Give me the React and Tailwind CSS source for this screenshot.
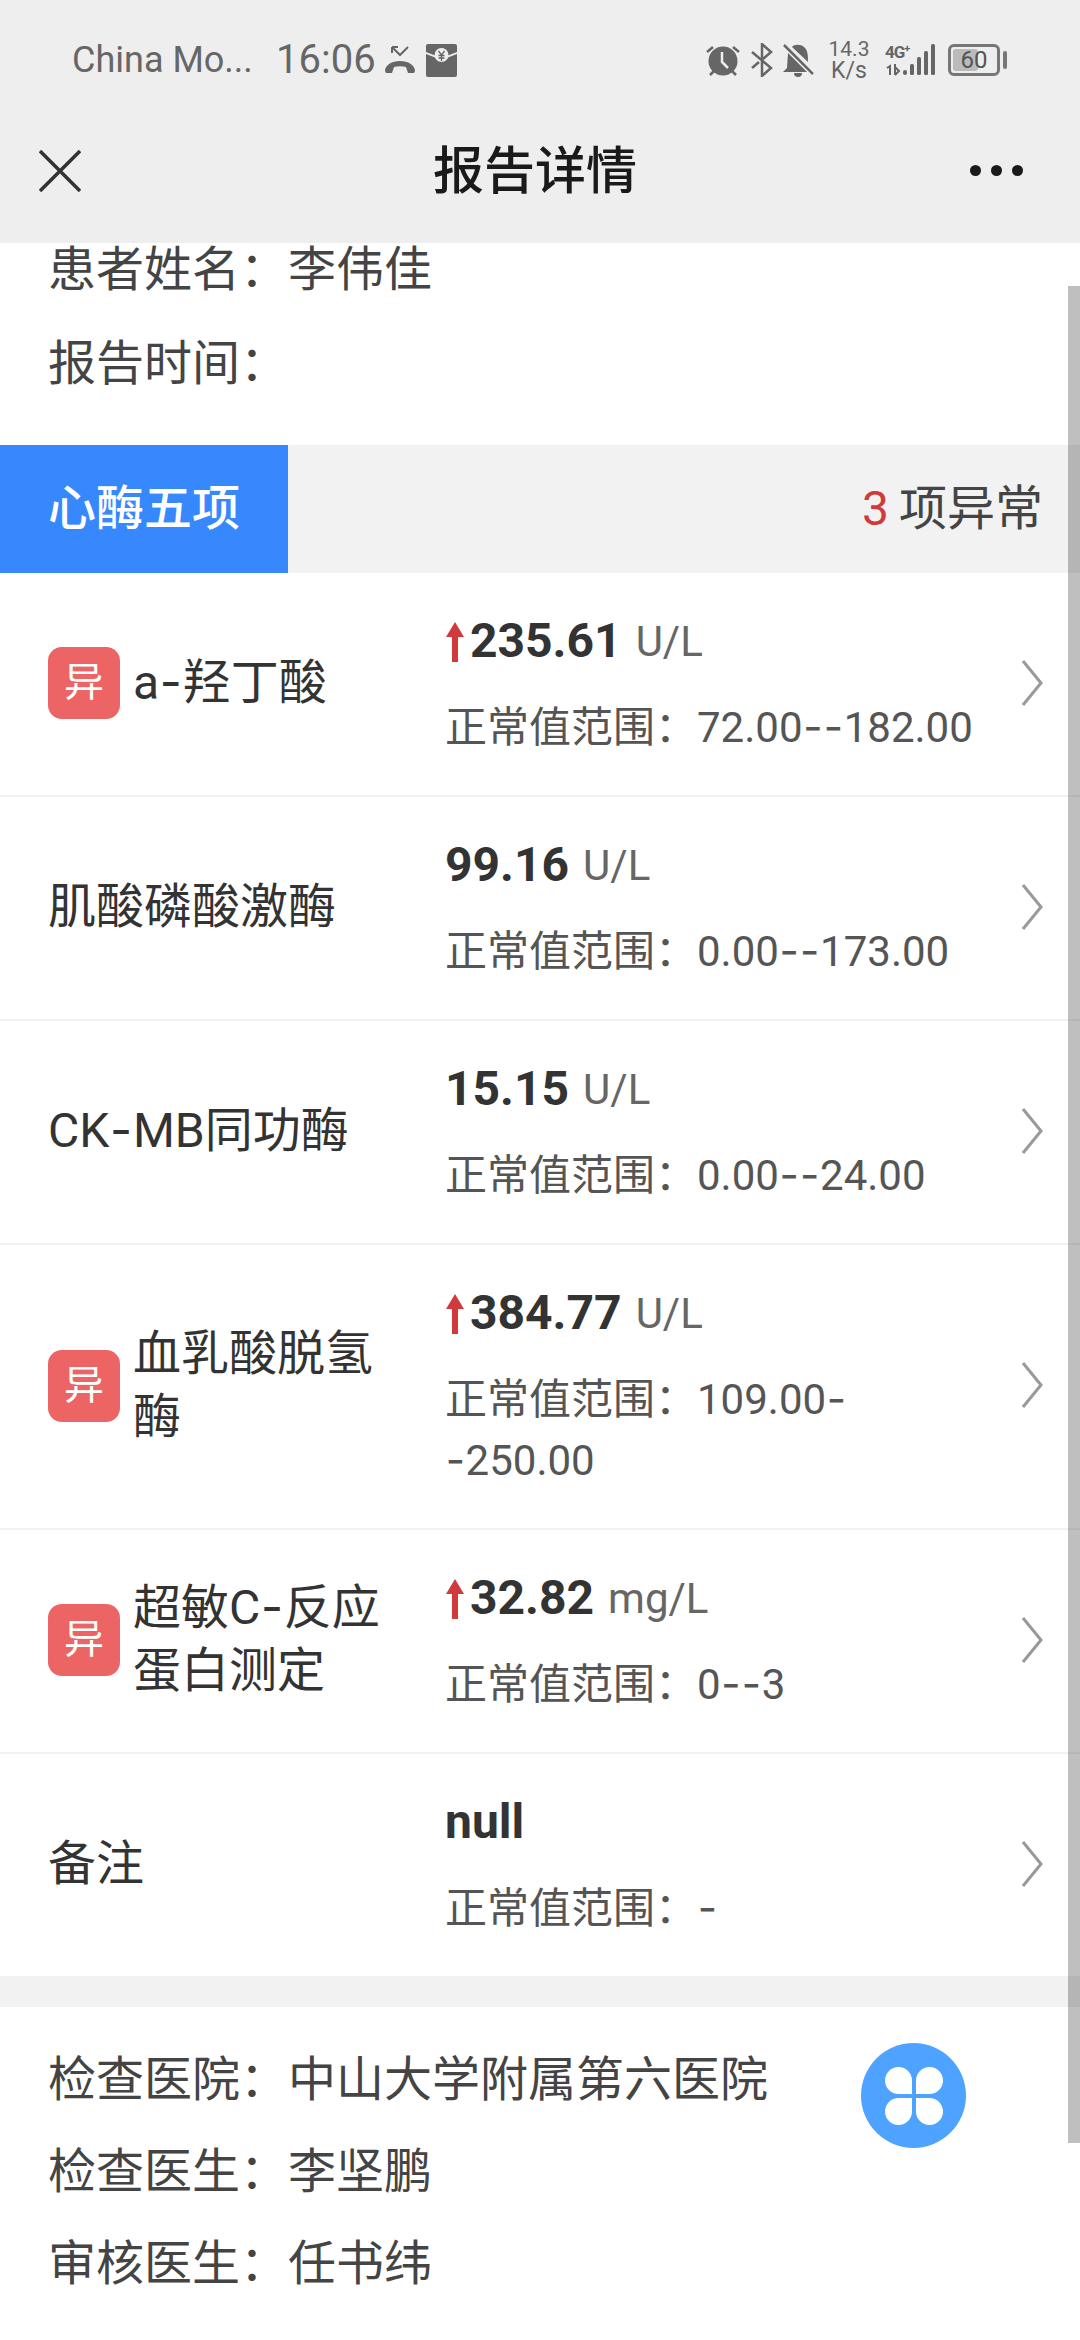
import { Fragment } from 'react';

const FONT = "font-['Roboto','Noto_Sans_CJK_SC',sans-serif]";

const items = [
  { name: 'a-羟丁酸', abnormal: true, up: true, value: '235.61', unit: 'U/L', range: '72.00--182.00' },
  { name: '肌酸磷酸激酶', value: '99.16', unit: 'U/L', range: '0.00--173.00' },
  { name: 'CK-MB同功酶', value: '15.15', unit: 'U/L', range: '0.00--24.00' },
  { name: '血乳酸脱氢酶', abnormal: true, up: true, value: '384.77', unit: 'U/L', range: '109.00-\n-250.00' },
  { name: '超敏C-反应蛋白测定', abnormal: true, up: true, value: '32.82', unit: 'mg/L', range: '0--3' },
  { name: '备注', value: 'null', unit: '', range: '-' },
];

// the phone's font has a much longer hyphen than Roboto, Inter's is closer
function Dashed({ text }) {
  const parts = text.split('-');
  return parts.map((part, i) => (
    <Fragment key={i}>
      {i > 0 && <span className="inline-block w-[0.49em] text-center font-['Inter',sans-serif] leading-none">-</span>}
      {part}
    </Fragment>
  ));
}

function StatusBar() {
  return (
    <div className="flex h-[120px] items-center pl-[72px] pr-[80px] text-[#666]">
      <span className="w-[204px] text-[36px] leading-none">China Mo...</span>
      <span className="w-[108px] text-[40px] leading-none">16:06</span>
      {/* missed call */}
      <svg width="32" height="32" viewBox="0 0 32 32" className="mr-[10px]">
        <path d="M1 27c0-6 7-10 15-10s15 4 15 10l-1 2h-6l-2-6c-4-1-8-1-12 0l-2 6H2z" fill="#666" />
        <path d="M8 3h6M8 3v6M9 4l7 7 8-8" fill="none" stroke="#666" strokeWidth="2" />
      </svg>
      {/* red packet */}
      <svg width="31" height="33" viewBox="0 0 31 33">
        <path d="M2 0h27a2 2 0 0 1 2 2v6L15.500 14 0 8V2a2 2 0 0 1 2-2z" fill="#666" />
        <path d="M0 10l15.500 6L31 10v21a2 2 0 0 1-2 2H2a2 2 0 0 1-2-2z" fill="#666" />
        <circle cx="15.500" cy="11" r="7" fill="#eee" />
        <path d="M12.500 7l3 4 3-4M12.500 11.500h6M12.500 14h6M15.500 11v6" stroke="#666" strokeWidth="1.300" fill="none" />
      </svg>
      <div className="flex-1" />
      {/* alarm */}
      <svg width="34" height="32" viewBox="0 0 34 32" className="mr-[11px]">
        <circle cx="17" cy="17" r="14.500" fill="#666" />
        <path d="M1 8l6-5M33 8l-6-5M4 31l4-4M30 31l-4-4" stroke="#666" strokeWidth="2.500" fill="none" />
        <path d="M16 8v10l6 6" stroke="#eee" strokeWidth="2.500" fill="none" />
      </svg>
      {/* bluetooth off */}
      <svg width="22" height="34" viewBox="0 0 22 34" className="mr-[10px]">
        <path d="M1 9l19 16-9 8V1l9 8-8 7M1 25l7-6" stroke="#666" strokeWidth="2.500" fill="none" />
      </svg>
      {/* muted bell */}
      <svg width="31" height="33" viewBox="0 0 31 33" className="mr-[13px]">
        <path d="M5 9L24 28H0l4-4zM9 3c2-3 9-3 12 0 4 3 4 9 4 15z" fill="#666" />
        <path d="M11 29h8a4 4 0 0 1-8 0z" fill="#666" />
        <path d="M1 1l29 29" stroke="#666" strokeWidth="2.500" />
        <path d="M4 0l28 29" stroke="#eee" strokeWidth="1.500" />
      </svg>
      <div className="mr-[14px] flex w-[44px] flex-col items-center text-[21px] leading-[21px]">
        <span>14.3</span>
        <span className="text-[23px]">K/s</span>
      </div>
      {/* 4G and signal */}
      <div className="relative mr-[12px] h-[32px] w-[51px]">
        <span className="absolute left-0 top-[-1px] text-[17px] font-bold leading-[18px] tracking-[-1px]">
          4G<span className="align-top text-[11px] leading-[12px]">+</span>
        </span>
        <svg width="51" height="32" viewBox="0 0 51 32" className="absolute left-0 top-0">
          <path d="M2 24l3-2v9M10 20v11M10 23l4 4-4 4" stroke="#666" strokeWidth="2" fill="none" />
          <rect x="18" y="26" width="4" height="5" rx="2" fill="#666" />
          <rect x="25" y="20" width="4" height="11" rx="1.500" fill="#666" />
          <rect x="32" y="13" width="4" height="18" rx="1.500" fill="#666" />
          <rect x="39" y="7" width="4" height="24" rx="1.500" fill="#666" />
          <rect x="46" y="0" width="4" height="31" rx="1.500" fill="#666" />
        </svg>
      </div>
      {/* battery */}
      <div className="relative flex h-[32px] w-[52px] items-center justify-center rounded-[6px] border-[3px] border-[#777]">
        <div className="absolute bottom-[2px] left-[2px] top-[2px] w-[25px] rounded-[3px] bg-[#bbb]" />
        <span className="relative text-[24px] leading-none text-[#555]">60</span>
        <div className="absolute right-[-10px] top-[4px] h-[18px] w-[4px] rounded-[2px] bg-[#777]" />
      </div>
    </div>
  );
}

function NavBar() {
  return (
    <div className="relative flex h-[123px] items-start justify-center pr-[10px]">
      <svg width="42" height="42" viewBox="0 0 42 42" className="absolute left-[39px] top-[30px]">
        <path d="M1 1l40 40M41 1L1 41" stroke="#333" strokeWidth="3.500" fill="none" />
      </svg>
      <span className="text-[51px] font-medium leading-[104px] text-[#1a1a1a]">报告详情</span>
      <div className="absolute right-[57px] top-[45px] flex gap-[10px]">
        <div className="h-[11px] w-[11px] rounded-full bg-[#1a1a1a]" />
        <div className="h-[11px] w-[11px] rounded-full bg-[#1a1a1a]" />
        <div className="h-[11px] w-[11px] rounded-full bg-[#1a1a1a]" />
      </div>
    </div>
  );
}

function ResultRow({ item }) {
  return (
    <div className="flex items-center border-b-2 border-[#f2f2f2] pb-[37px] pl-[48px] pr-[37px] pt-[30px]">
      <div className="mt-[3px] flex w-[397px] items-center">
        {item.abnormal && (
          <div className="mr-[13px] mt-[2px] flex h-[72px] w-[72px] shrink-0 items-center justify-center rounded-[14px] bg-[#ec6464] text-[40px] text-white">
            异
          </div>
        )}
        <div className={`${item.abnormal ? 'w-[252px]' : 'w-[340px]'} text-[48px] leading-[63px] text-[#333]`}>
          <Dashed text={item.name} />
        </div>
      </div>
      <div className="flex-1">
        <div className="flex h-[76px] items-center">
          {item.up && (
            <svg width="20" height="40" viewBox="0 0 20 40" className="mr-[5px] mt-[1px] shrink-0">
              <path d="M10 0l9 15h-6v25H7V15H1z" fill="#d13a3a" />
            </svg>
          )}
          <span className="text-[48px] font-bold text-[#333]">{item.value}</span>
          <span className="ml-[14px] text-[42px] text-[#666]">{item.unit}</span>
        </div>
        <div className="mt-[18px] whitespace-pre-line text-[42px] leading-[61px] text-[#555]">
          正常值范围：<Dashed text={item.range} />
        </div>
      </div>
      <svg width="22" height="46" viewBox="0 0 22 46" className="mt-[4px] shrink-0">
        <path d="M2 1l18 22L2 45" stroke="#999" strokeWidth="3" fill="none" />
      </svg>
    </div>
  );
}

export default function App() {
  return (
    <div className={`relative h-[2340px] w-[1080px] overflow-hidden bg-white ${FONT}`}>
      <div className="bg-[#eeeeee]">
        <StatusBar />
        <NavBar />
      </div>

      <div className="px-[48px] text-[48px] leading-[93px] text-[#444]">
        <div className="-mt-[20px] h-[94px]">患者姓名：李伟佳</div>
        <div className="h-[93px]">报告时间：</div>
      </div>

      <div className="mt-[35px] flex h-[128px] items-center justify-between bg-[#f2f2f2] pr-[37px]">
        <div className="flex h-full w-[288px] items-center justify-center bg-[#3788fd] text-[48px] font-medium text-white">
          心酶五项
        </div>
        <div className="text-[48px] text-[#444]">
          <span className="text-[#d13a3a]">3</span>
          <span className="ml-[10px]">项异常</span>
        </div>
      </div>

      {items.map((item) => (
        <ResultRow key={item.name} item={item} />
      ))}

      <div className="h-[29px] bg-[#f2f2f2]" />

      <div className="px-[48px] pt-[27px] text-[48px] leading-[92px] text-[#444]">
        <div>检查医院：中山大学附属第六医院</div>
        <div>检查医生：李坚鹏</div>
        <div>审核医生：任书纬</div>
      </div>

      {/* floating button */}
      <div className="absolute left-[861px] top-[2043px] flex h-[105px] w-[105px] items-center justify-center rounded-full bg-[#4da3ff]">
        <div className="grid grid-cols-2 gap-[4px]">
          <div className="h-[27px] w-[27px] rounded-[14px] rounded-br-none bg-white" />
          <div className="h-[27px] w-[27px] rounded-[14px] rounded-bl-none bg-white" />
          <div className="h-[27px] w-[27px] rounded-[14px] rounded-tr-none bg-white" />
          <div className="h-[27px] w-[27px] rounded-[14px] rounded-tl-none bg-white" />
        </div>
      </div>

      {/* scroll bar */}
      <div className="absolute left-[1068px] top-[286px] h-[1857px] w-[12px] bg-black/25" />
    </div>
  );
}
